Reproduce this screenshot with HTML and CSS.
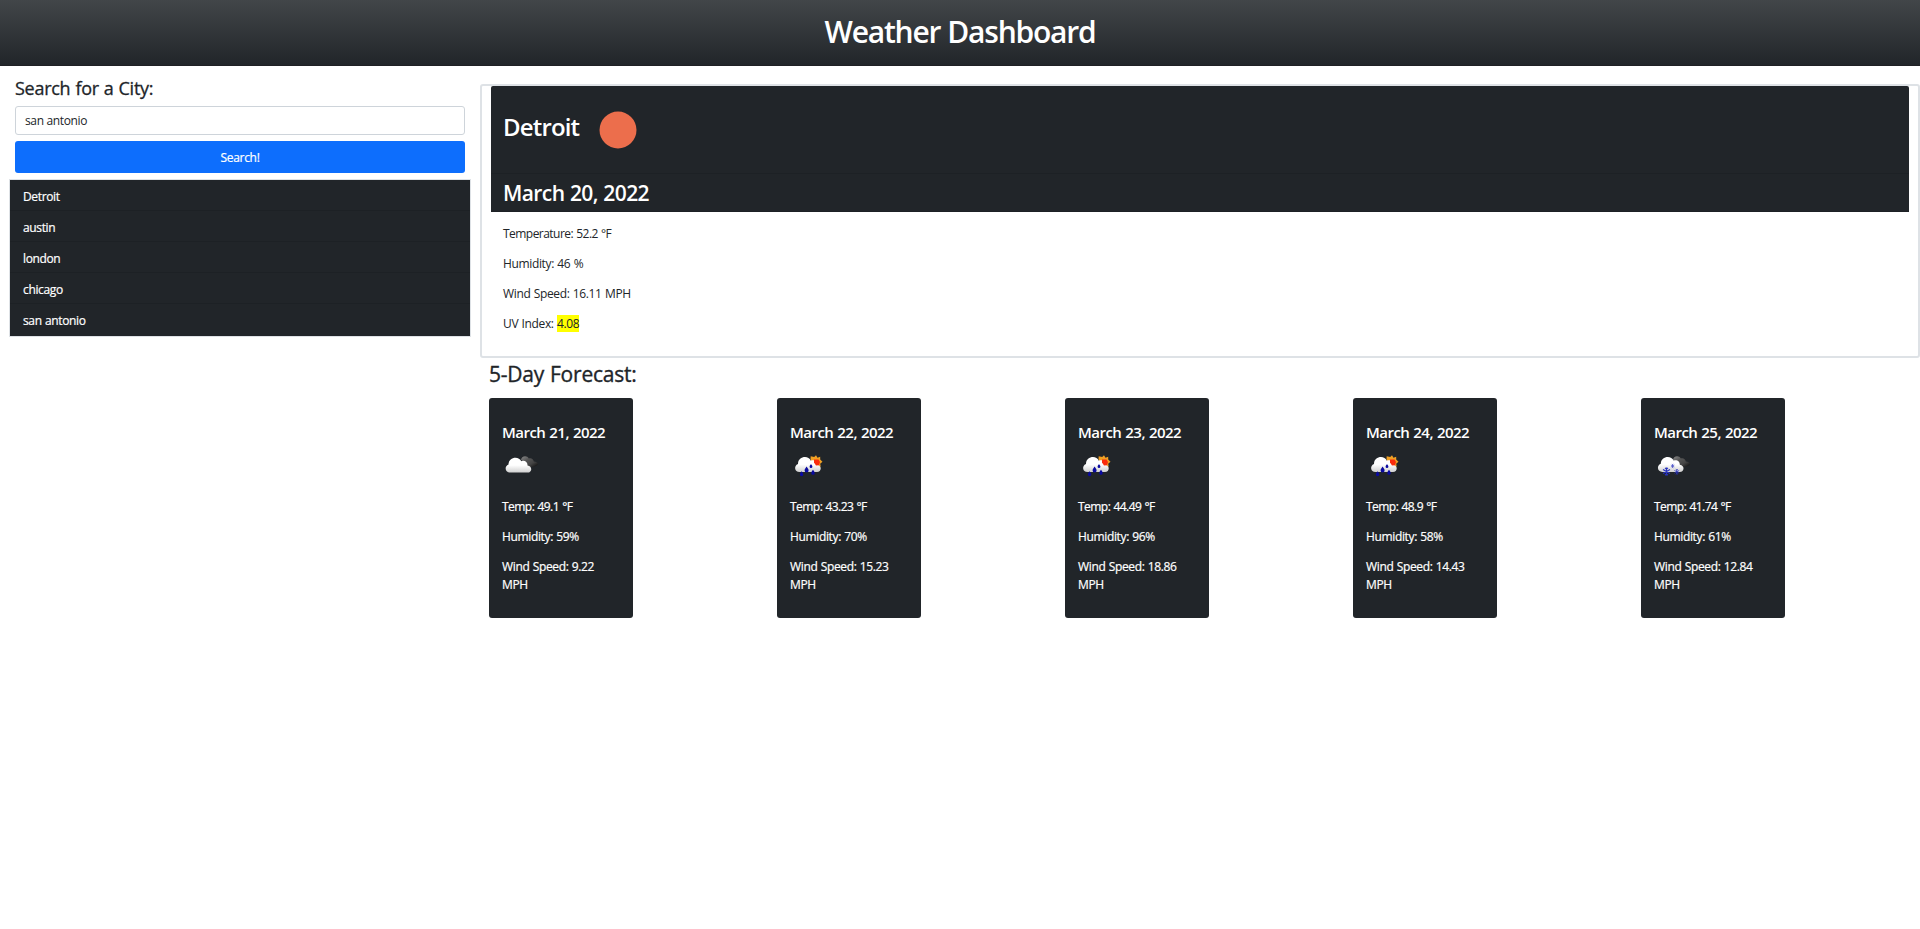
FILE: index.html
```html
<!DOCTYPE html>
<html lang="en">
<head>
<meta charset="utf-8">
<title>Weather Dashboard</title>
<link rel="stylesheet" href="styles.css">
</head>
<body>
<svg class="defs" aria-hidden="true">
  <defs>
    <linearGradient id="white" x1="0" y1="0" x2="0" y2="1"><stop offset=".5" stop-color="#fff"/><stop offset="1" stop-color="#cfcfcf"/></linearGradient>
    <linearGradient id="gray" x1="0" y1="0" x2="1" y2="1"><stop offset="0" stop-color="#8a8a8a"/><stop offset=".35" stop-color="#555"/><stop offset=".65" stop-color="#444"/><stop offset="1" stop-color="#080808"/></linearGradient>
    <path id="cloud" d="M15 32.600C9.800 32.600 9.200 26 13.500 24.500C13.500 16.800 24 15.500 26.300 21.300C29.500 19.800 32.800 22.200 32.500 25.400C37.600 26 37.400 32.600 32.500 32.600z" fill="url(#white)"/>
    <path id="dark" d="M26 20C26.200 15.500 32.300 15 33.800 18.500C36.500 17.600 38.400 19.500 38.800 21.500C41 21.600 42.500 22.500 43.300 24C42 26.700 37 27.300 32.500 26.800C32.300 23.500 29.500 21 26 20z" fill="url(#gray)"/>
    <path id="drop" d="M0-3C.8-1.800 2-.5 2 .9A2 2 0 0 1-2 .9C-2-.5-.8-1.800 0-3z" fill="#0a0aa0"/>
    <path id="flake" d="M0-4V4M-3.500-2 3.500 2M-3.500 2 3.500-2M-1.500-3.600 0-2.300 1.500-3.600M-1.500 3.600 0 2.300 1.500 3.600" fill="none" stroke="#2832be" stroke-width="1.100"/>
  </defs>
  <symbol id="clouds" viewBox="7 5 40 40"><use href="#dark"/><use href="#cloud"/></symbol>
  <symbol id="rain" viewBox="7 5 40 40">
    <path d="m33 15.300 1.500 2.400 2.700-1v2.800l2.300 2.300-2.300 2 .5 2.600-3.700.6-5-3-1.500-5 .2-2.700 3.500.6z" fill="#f0a024"/>
    <use href="#cloud" transform="translate(1.500 -.6)"/>
    <path d="M31 19.500h4.500l1.500 2.500-1 3.200-3 .3-2-3z" fill="#fa2c0c"/>
    <use href="#drop" transform="translate(23.600 29.600)"/>
    <use href="#drop" transform="translate(18.600 33.800) scale(.85)"/>
    <use href="#drop" transform="translate(30 32.400) scale(.85)"/>
    <use href="#drop" transform="translate(28 26) scale(.7)"/>
  </symbol>
  <symbol id="snow" viewBox="7 5 40 40">
    <use href="#dark"/><use href="#cloud" transform="translate(.3 -.7)"/>
    <use href="#flake" transform="translate(19.500 31.500)"/>
    <use href="#flake" transform="translate(29.800 31.800) scale(.68)"/>
    <use href="#flake" transform="translate(25.600 26) scale(.5)"/>
  </symbol>
</svg>
<header class="banner"><h1>Weather Dashboard</h1></header>
<div class="layout">
  <aside class="sidebar">
    <form class="search">
      <label for="city">Search for a City:</label>
      <input id="city" type="text" value="san antonio">
      <button type="button">Search!</button>
    </form>
    <ul class="history">
      <li>Detroit</li><li>austin</li><li>london</li><li>chicago</li><li>san antonio</li>
    </ul>
  </aside>
  <main>
    <section class="current">
      <div class="place">
        <h2>Detroit</h2>
        <svg class="sun" viewBox="0 0 38 38"><circle cx="19" cy="19" r="18.500" fill="#ec6e4c"/></svg>
      </div>
      <h3 class="today">March 20, 2022</h3>
      <div class="readings">
        <p class="temperature">Temperature: 52.2 °F</p>
        <p>Humidity: 46 %</p>
        <p>Wind Speed: 16.11 MPH</p>
        <p>UV Index: <span class="uv">4.08</span></p>
      </div>
    </section>
    <h3 class="forecast-title">5-Day Forecast:</h3>
    <section class="forecast">
      <article class="card"><h5>March 21, 2022</h5><svg class="icon"><use href="#clouds"/></svg><p class="temperature">Temp: 49.1 °F</p><p>Humidity: 59%</p><p>Wind Speed: 9.22<br>MPH</p></article>
      <article class="card"><h5>March 22, 2022</h5><svg class="icon"><use href="#rain"/></svg><p class="temperature">Temp: 43.23 °F</p><p>Humidity: 70%</p><p>Wind Speed: 15.23<br>MPH</p></article>
      <article class="card"><h5>March 23, 2022</h5><svg class="icon"><use href="#rain"/></svg><p class="temperature">Temp: 44.49 °F</p><p>Humidity: 96%</p><p>Wind Speed: 18.86<br>MPH</p></article>
      <article class="card"><h5>March 24, 2022</h5><svg class="icon"><use href="#rain"/></svg><p class="temperature">Temp: 48.9 °F</p><p>Humidity: 58%</p><p>Wind Speed: 14.43<br>MPH</p></article>
      <article class="card"><h5>March 25, 2022</h5><svg class="icon"><use href="#snow"/></svg><p class="temperature">Temp: 41.74 °F</p><p>Humidity: 61%</p><p>Wind Speed: 12.84<br>MPH</p></article>
    </section>
  </main>
</div>
</body>
</html>
```
FILE: styles.css
```css
* { box-sizing: border-box; margin: 0; padding: 0; }
body {
  font: 12px/18px "Segoe UI", "Open Sans", "Noto Sans", sans-serif;
  letter-spacing: -0.03em;
  word-spacing: 0.6px;
  color: #212529;
  background: #fff;
}
.defs { display: block; width: 0; height: 0; }
.banner {
  height: 66px;
  padding-top: 14px;
  text-align: center;
  color: #fff;
  background: linear-gradient(#424649, #212529);
  border-bottom: 1px solid #1f2024;
}
.banner h1 { font-size: 30px; line-height: 36px; font-weight: 600; letter-spacing: -0.041em; }
.layout { display: flex; }
.sidebar { flex: 0 0 480px; padding: 11px 9px 0; }
.search { display: flex; flex-direction: column; padding: 0 6px; }
.search label { font-size: 18px; line-height: 22px; margin-bottom: 7px; letter-spacing: -0.015em; -webkit-text-stroke: 0.3px; }
.search input {
  height: 29px;
  padding: 0 9px;
  border: 1px solid #ced4da;
  border-radius: 3px;
  font: inherit;
  letter-spacing: inherit;
  color: inherit;
}
.search button {
  height: 32px;
  padding-top: 1px;
  margin-top: 6px;
  border: 0;
  border-radius: 3px;
  background: #0d6efd;
  color: #fff;
  font: inherit;
  letter-spacing: -0.025em;
  -webkit-text-stroke: 0.2px;
}
.history { list-style: none; margin-top: 6px; border: 1px solid #dee2e6; background: #212529; -webkit-text-stroke: 0.2px; }
.history li {
  height: 31px;
  padding: 8px 13px 0;
  color: #fff;
  line-height: 18px;
  border-bottom: 1px solid #1d2125;
}
.history li:last-child { height: 32px; border: 0; }
main { flex: 1; min-width: 0; padding-top: 18px; }
.current { height: 274px; padding: 0 9px; border: 2px solid #dee2e6; border-radius: 3px; }
.place {
  display: flex;
  height: 88px;
  padding: 24px 12px 0;
  background: #212529;
  border-bottom: 1px solid #1d2125;
  border-radius: 2px 2px 0 0;
  color: #fff;
}
.place h2 { width: 96px; font-size: 24px; line-height: 34px; font-weight: 600; letter-spacing: -0.035em; }
.sun { width: 38px; height: 38px; margin-top: 1px; }
.today {
  height: 38px;
  padding: 6px 12px 0;
  font-size: 21px;
  line-height: 27px;
  font-weight: 600;
  letter-spacing: -0.028em;
  color: #fff;
  background: #212529;
  border-bottom: 1px solid #1d2125;
}
.readings { padding: 13px 12px 0; }
.readings p, .card p { margin-bottom: 12px; }
.readings .temperature, .card .temperature { letter-spacing: -0.045em; }
.uv { background: #ff0; }
.forecast-title { padding: 3px 9px 0; font-size: 21px; line-height: 26px; font-weight: 400; letter-spacing: -0.01em; -webkit-text-stroke: 0.35px; }
.forecast { display: grid; grid-template-columns: repeat(5, 288px); padding: 11px 0 0 9px; }
.card {
  width: 144px;
  height: 220px;
  padding: 25px 13px 0;
  border-radius: 3px;
  background: #212529;
  color: #fff;
}
.card p { -webkit-text-stroke: 0.2px; }
.card h5 { font-size: 15px; line-height: 18px; font-weight: 600; letter-spacing: -0.035em; white-space: nowrap; }
.icon { display: block; width: 40px; height: 40px; margin: 4px 0 13px; }
```
